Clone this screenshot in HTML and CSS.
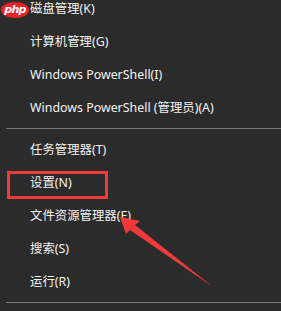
FILE: index.html
```html
<!DOCTYPE html>
<html lang="zh-CN">
<head>
<meta charset="utf-8">
<link rel="stylesheet" href="styles.css">
</head>
<body>
<div class="menu">
  <div class="item">磁盘管理(K)</div>
  <div class="item">计算机管理(G)</div>
  <div class="item">Windows PowerShell(I)</div>
  <div class="item">Windows PowerShell (管理员)(A)</div>
  <div class="sep"></div>
  <div class="item">任务管理器(T)</div>
  <div class="item">设置(N)</div>
  <div class="item">文件资源管理器(E)</div>
  <div class="item">搜索(S)</div>
  <div class="item">运行(R)</div>
  <div class="sep"></div>
</div>
<div class="highlight"></div>
<div class="logo"><span>php</span></div>
<svg class="arrow" width="281" height="311" viewBox="0 0 281 311">
  <polygon points="120,217 140,221 135,225 213,287 130,230 126,234" fill="#f23a3a"/>
</svg>
</body>
</html>
```
FILE: styles.css
```css
html, body {
  margin: 0;
  padding: 0;
  background: #2b2b2b;
  width: 281px;
  height: 311px;
  overflow: hidden;
}
body {
  position: relative;
  font-family: "Noto Sans", "Noto Sans CJK SC", sans-serif;
  font-size: 12.4px;
  color: #f2f2f2;
}
.menu {
  display: flex;
  flex-direction: column;
  margin-top: -8px;
}
.item {
  height: 33px;
  line-height: 33px;
  padding-left: 30px;
  white-space: nowrap;
}
.sep {
  height: 1px;
  background: #7a7a7a;
  margin: 4px 0 4px 6px;
}
.highlight {
  position: absolute;
  left: 7px;
  top: 171px;
  width: 95px;
  height: 22px;
  border: 3px solid #f23a3a;
}
.logo {
  position: absolute;
  left: 1px;
  top: 2px;
  width: 28px;
  height: 16px;
  border-radius: 50%;
  background: #e8232a;
  display: flex;
  align-items: center;
  justify-content: center;
}
.logo span {
  font-family: "DejaVu Sans", sans-serif;
  font-style: italic;
  font-weight: bold;
  font-size: 11px;
  color: #ffffff;
  letter-spacing: -0.7px;
  line-height: 1;
  margin-top: -1px;
}
.arrow {
  position: absolute;
  left: 0;
  top: 0;
}
```
